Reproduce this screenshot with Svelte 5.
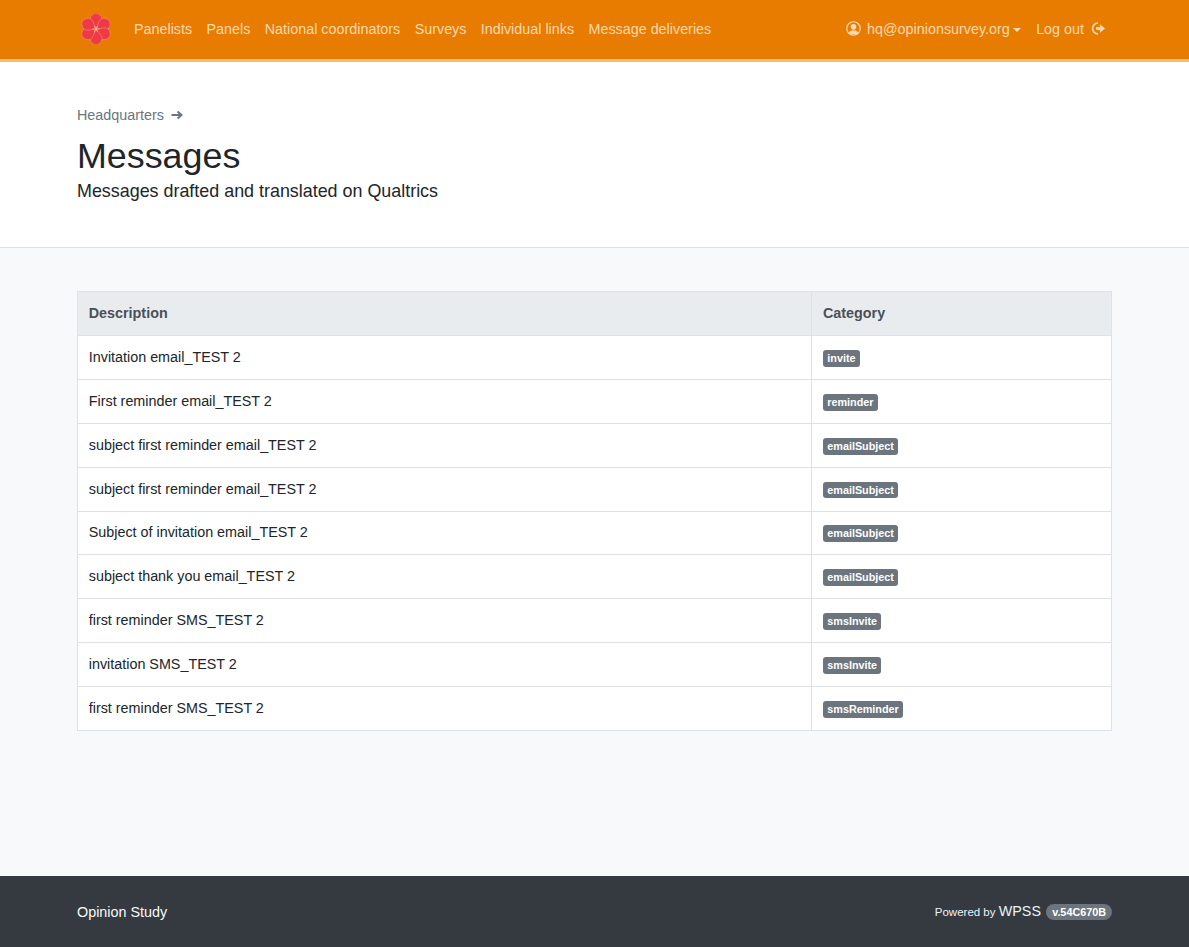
<script>
  const links = ['Panelists', 'Panels', 'National coordinators', 'Surveys', 'Individual links', 'Message deliveries'];
  const messages = [
    ['Invitation email_TEST 2', 'invite'],
    ['First reminder email_TEST 2', 'reminder'],
    ['subject first reminder email_TEST 2', 'emailSubject'],
    ['subject first reminder email_TEST 2', 'emailSubject'],
    ['Subject of invitation email_TEST 2', 'emailSubject'],
    ['subject thank you email_TEST 2', 'emailSubject'],
    ['first reminder SMS_TEST 2', 'smsInvite'],
    ['invitation SMS_TEST 2', 'smsInvite'],
    ['first reminder SMS_TEST 2', 'smsReminder']
  ];
  const petals = [0, 60, 120, 180, 240, 300];
</script>

<div class="page">
  <nav class="navbar">
    <div class="brand">
      <svg viewBox="0 0 30 30" width="30" height="30" aria-hidden="true">
        {#each petals as a}
          <g transform="rotate({a} 15 15)">
            <path d="M15 15 L10 8.6 A5.9 5.9 0 1 1 20 8.6 Z" fill="#ee3a47" stroke="#f79a76" stroke-width="0.5" />
          </g>
        {/each}
        {#each petals as a}
          <line x1="15" y1="15" x2="15" y2="11.5" stroke="#f9b48a" stroke-width="0.9" transform="rotate({a + 30} 15 15)" />
        {/each}
      </svg>
    </div>
    <ul class="nav-links">
      {#each links as link}
        <li>{link}</li>
      {/each}
    </ul>
    <div class="nav-right">
      <span class="user">
        <svg viewBox="0 0 16 16" width="15" height="15" aria-hidden="true">
          <circle cx="8" cy="8" r="7.2" fill="none" stroke="currentColor" stroke-width="1.3" />
          <circle cx="8" cy="6.2" r="3" fill="currentColor" />
          <path d="M3 13 C3.6 10.4 6 9.8 8 9.8 C10 9.8 12.4 10.4 13 13 C11.5 14.6 4.5 14.6 3 13 Z" fill="currentColor" />
        </svg>
        hq@opinionsurvey.org
        <i class="caret"></i>
      </span>
      <span class="logout">
        Log out
        <svg viewBox="0 0 16 16" width="15" height="15" aria-hidden="true">
          <path d="M7.5 2.2 A5.8 5.8 0 1 0 7.5 13.8" fill="none" stroke="currentColor" stroke-width="1.7" />
          <path d="M5.5 6.4 H9.5 V3.4 L15 8 L9.5 12.6 V9.6 H5.5 Z" fill="currentColor" />
        </svg>
      </span>
    </div>
  </nav>

  <header class="head">
    <div class="crumb">
      Headquarters
      <svg viewBox="0 0 12 10" width="12" height="10" aria-hidden="true">
        <path d="M0.5 5 H10 M6.5 1.5 L10.5 5 L6.5 8.5" fill="none" stroke="currentColor" stroke-width="2" />
      </svg>
    </div>
    <h1>Messages</h1>
    <p class="lead">Messages drafted and translated on Qualtrics</p>
  </header>

  <main class="content">
    <table>
      <thead>
        <tr>
          <th class="desc">Description</th>
          <th>Category</th>
        </tr>
      </thead>
      <tbody>
        {#each messages as [description, category]}
          <tr>
            <td>{description}</td>
            <td><span class="badge">{category}</span></td>
          </tr>
        {/each}
      </tbody>
    </table>
  </main>

  <footer class="footer">
    <span class="study">Opinion Study</span>
    <span class="powered">
      Powered by <span class="wpss">WPSS</span>
      <span class="version">v.54C670B</span>
    </span>
  </footer>
</div>

<style>
  :global(body) {
    font-family: "Liberation Sans", Arial, sans-serif;
    color: #212529;
    background: #f8f9fa;
  }

  .page {
    display: flex;
    flex-direction: column;
    min-height: 947px;
  }

  .navbar {
    display: flex;
    align-items: center;
    padding: 0 77px 2px 81px;
    height: 57px;
    background: #e87c00;
    border-bottom: 3px solid #f3bb7a;
    color: #fbd9b0;
    font-size: 14.35px;
  }
  .brand { display: flex; margin-right: 23px; }
  .nav-links {
    display: flex;
    gap: 14.35px;
    list-style: none;
    margin: 0;
    padding: 0;
  }
  .nav-right {
    display: flex;
    align-items: center;
    gap: 15.35px;
    margin-left: auto;
  }
  .user, .logout { display: flex; align-items: center; gap: 7px; }
  .user { gap: 6px; }
  .logout { padding-right: 6px; }
  .caret {
    display: block;
    margin-left: -3px;
    margin-top: 2px;
    border-top: 4px solid currentColor;
    border-left: 4px solid transparent;
    border-right: 4px solid transparent;
  }

  .head {
    background: #fff;
    border-bottom: 1px solid #dee2e6;
    padding: 43px 77px 44px;
    height: 186px;
    box-sizing: border-box;
  }
  .crumb {
    display: flex;
    align-items: center;
    gap: 7px;
    color: #6c757d;
    font-size: 14.35px;
    line-height: 20px;
  }
  h1 {
    margin: 10px 0 0;
    font-size: 35.85px;
    font-weight: 400;
    line-height: 43px;
  }
  .lead {
    margin: 0;
    font-size: 17.9px;
    line-height: 27px;
  }

  .content {
    flex: 1;
    padding: 43.3px 77px 44px;
  }
  table {
    width: 100%;
    table-layout: fixed;
    border-collapse: collapse;
    background: #fff;
    font-size: 14.35px;
  }
  th, td {
    border: 1px solid #dee2e6;
    padding: 0 10.75px 1px 10.75px;
    height: 43.85px;
    box-sizing: border-box;
    text-align: left;
  }
  th + th, td + td { padding-left: 11px; }
  th {
    background: #e9ecef;
    color: #495057;
    font-weight: 700;
  }
  .desc { width: 734px; }
  .badge {
    display: inline-block;
    position: relative;
    top: 1px;
    padding: 3px 4.3px;
    border-radius: 3px;
    background: #6c757d;
    color: #fff;
    font-size: 10.8px;
    font-weight: 700;
    line-height: 1;
    vertical-align: middle;
  }

  .footer {
    display: flex;
    align-items: center;
    justify-content: space-between;
    height: 71px;
    padding: 0 77px;
    background: #343a40;
    color: #f8f9fa;
    font-size: 14.35px;
  }
  .powered { font-size: 11.5px; color: #e9f2fa; }
  .wpss { font-size: 14.35px; }
  .version {
    display: inline-block;
    margin-left: 2px;
    padding: 2px 6px;
    border-radius: 8px;
    background: #6c757d;
    color: #fff;
    font-size: 10.8px;
    font-weight: 700;
  }
</style>
